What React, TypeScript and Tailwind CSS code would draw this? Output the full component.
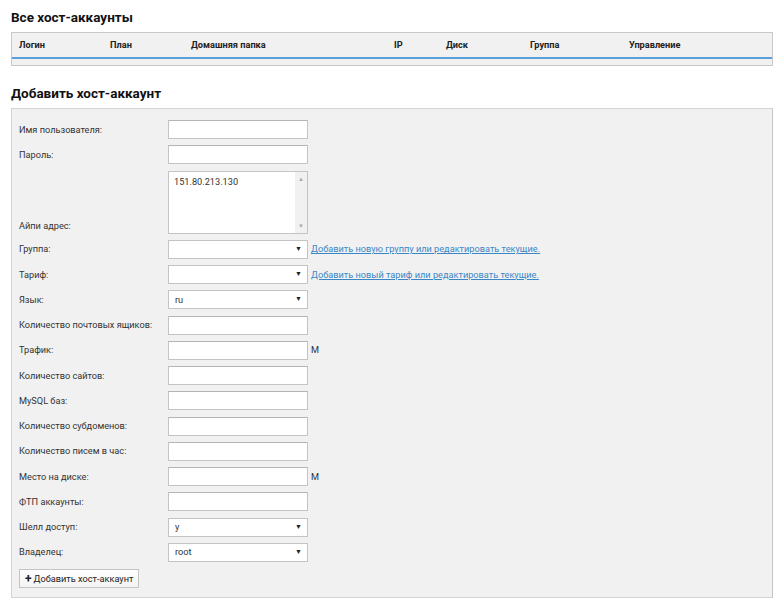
import React from "react";

const columns = [
  { label: "Логин", w: "w-[91px]" },
  { label: "План", w: "w-[81px]" },
  { label: "Домашняя папка", w: "w-[203px]" },
  { label: "IP", w: "w-[52px]" },
  { label: "Диск", w: "w-[84px]" },
  { label: "Группа", w: "w-[99px]" },
  { label: "Управление", w: "flex-1" },
];

function TextInput({ suffix }: { suffix?: string }) {
  return (
    <div className="flex items-center">
      <div className="h-[19px] w-[140px] border border-[#c4c4c4] border-t-[#b4b4b4] bg-white" />
      {suffix && <span className="ml-[3px] text-[9.2px] text-[#333]">{suffix}</span>}
    </div>
  );
}

function SelectBox({ value, link }: { value?: string; link?: string }) {
  return (
    <div className="flex items-center">
      <div className="flex h-[19px] w-[140px] items-center justify-between border border-[#c4c4c4] bg-white pl-[6px] pr-[5px] text-[9.2px] text-[#333]">
        <span>{value}</span>
        <span className="text-[7px] leading-none text-[#222]">▼</span>
      </div>
      {link && (
        <a href="#" className="ml-[3px] text-[9.2px] text-[#3a87c8] underline">
          {link}
        </a>
      )}
    </div>
  );
}

type Row = { label: string; kind: "text" | "select"; value?: string; link?: string; suffix?: string };

const rowsTop: Row[] = [
  { label: "Имя пользователя:", kind: "text" },
  { label: "Пароль:", kind: "text" },
];

const rowsBottom: Row[] = [
  { label: "Группа:", kind: "select", link: "Добавить новую группу или редактировать текущие." },
  { label: "Тариф:", kind: "select", link: "Добавить новый тариф или редактировать текущие." },
  { label: "Язык:", kind: "select", value: "ru" },
  { label: "Количество почтовых ящиков:", kind: "text" },
  { label: "Трафик:", kind: "text", suffix: "М" },
  { label: "Количество сайтов:", kind: "text" },
  { label: "MySQL баз:", kind: "text" },
  { label: "Количество субдоменов:", kind: "text" },
  { label: "Количество писем в час:", kind: "text" },
  { label: "Место на диске:", kind: "text", suffix: "М" },
  { label: "ФТП аккаунты:", kind: "text" },
  { label: "Шелл доступ:", kind: "select", value: "y" },
  { label: "Владелец:", kind: "select", value: "root" },
];

function FormRow({ row }: { row: Row }) {
  return (
    <div className="flex items-center">
      <div className="w-[149px] text-[9.2px] text-[#333]">{row.label}</div>
      {row.kind === "text" ? <TextInput suffix={row.suffix} /> : <SelectBox value={row.value} link={row.link} />}
    </div>
  );
}

export default function App() {
  return (
    <div className="min-h-[600px] bg-white pl-[11px] pr-[8px] pt-[8px] font-['Roboto','Liberation_Sans',sans-serif] text-[#222]">
      <h2 className="h-[18px] text-[13.5px] font-bold leading-[18px] text-[#111]">Все хост-аккаунты</h2>

      <div className="mt-[6px] border border-[#c8c8c8] bg-[#f1f1f1]">
        <div className="flex h-[26px] items-center border-b-2 border-[#5a9fd8] pl-[7px] text-[9.2px] font-bold text-[#222]">
          {columns.map((c) => (
            <div key={c.label} className={c.w}>
              {c.label}
            </div>
          ))}
        </div>
        <div className="h-[6px]" />
      </div>

      <h2 className="mt-[18px] h-[18px] text-[13.5px] font-bold leading-[18px] text-[#111]">Добавить хост-аккаунт</h2>

      <div className="mt-[6px] border border-[#d4d4d4] border-r-[#c4c4c4] bg-[#f1f1f1] pb-[9px] pl-[7px] pt-[11px]">
        <div className="flex flex-col gap-[6.25px]">
          {rowsTop.map((r) => (
            <FormRow key={r.label} row={r} />
          ))}
          <div className="flex items-end">
            <div className="w-[149px] pb-[1px] text-[9.2px] text-[#333]">Айпи адрес:</div>
            <div className="flex h-[63px] w-[140px] border border-[#c4c4c4] bg-white">
              <div className="flex-1 pl-[5px] pt-[3px] text-[9.2px] text-[#333]">151.80.213.130</div>
              <div className="flex w-[12px] flex-col items-center justify-between bg-[#f1f1f1] py-[4px] text-[6px] leading-none text-[#aaa]">
                <span>▲</span>
                <span>▼</span>
              </div>
            </div>
          </div>
          {rowsBottom.map((r) => (
            <FormRow key={r.label} row={r} />
          ))}
          <div className="pt-[1px]">
            <button className="flex h-[19px] items-center gap-[2px] border border-[#c4c4c4] bg-gradient-to-b from-white to-[#f3f3f3] px-[5px] text-[9.2px] text-[#222]">
              <span className="text-[12px] font-bold leading-none">+</span>
              <span>Добавить хост-аккаунт</span>
            </button>
          </div>
        </div>
      </div>
    </div>
  );
}
